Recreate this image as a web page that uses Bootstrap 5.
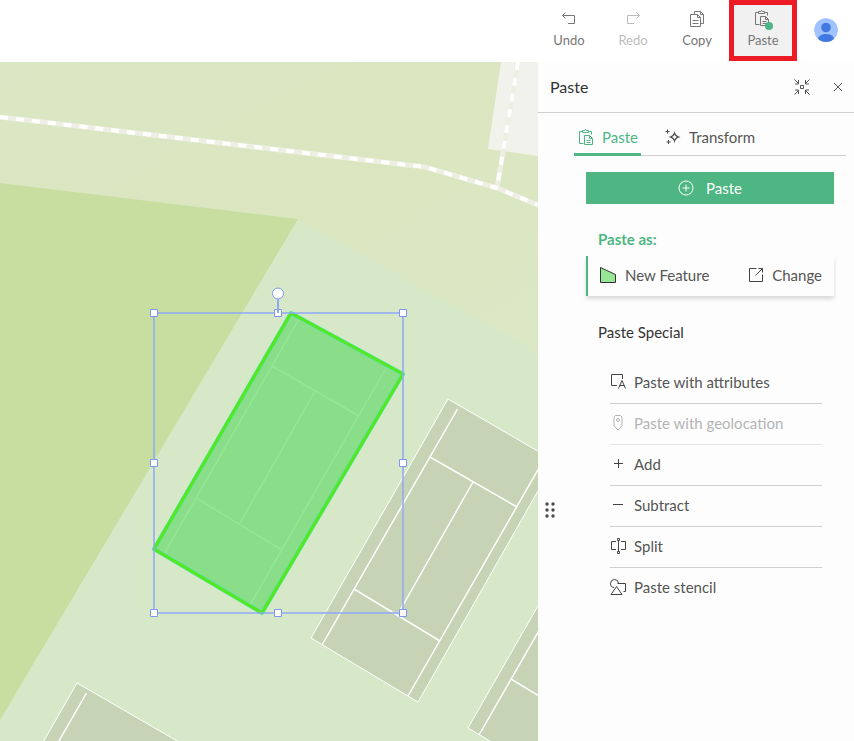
<!DOCTYPE html>
<html lang="en">
<head>
<meta charset="utf-8">
<meta name="viewport" content="width=device-width, initial-scale=1">
<title>Map editor</title>
<link href="https://cdn.jsdelivr.net/npm/bootstrap@5.3.0/dist/css/bootstrap.min.css" rel="stylesheet">
<style>
  body { font-family: Lato, "Open Sans", sans-serif; font-size: 15px; line-height: 20px; color: #555; background: #fff; }
  svg { display: block; flex: none; }
  button { font: inherit; color: inherit; background: none; border: 0; padding: 0; }
  .stroke { fill: none; stroke: currentColor; stroke-width: 1; }
  .topbar { height: 62px; padding-right: 15px; }
  .tool { width: 64px; height: 56px; padding-top: 7px; font-size: 13px; line-height: 18px; color: #777; }
  .tool svg { margin-bottom: 4px; }
  .tool:disabled { color: #bcbcbc; }
  .tool-marked { width: 68px; height: 61px; border: 5px solid #ed1c24; background: #f1f1f1; padding-top: 5px; }
  .tool-marked svg { margin-bottom: 1px; }
  .avatar { margin-left: 16px; }
  .side { width: 316px; background: #fdfdfd; }
  .side-head { height: 51px; padding: 0 10px 0 12px; border-bottom: 1px solid #cfcfcf; gap: 22px; }
  .side-head h1 { font-size: 16px; line-height: 20px; font-weight: 400; color: #333; }
  .grip { width: 24px; margin-top: 389px; align-self: flex-start; color: #4a4a4a; }
  .side-main { padding: 7px 8px 0 12px; }
  .tabs { border-bottom: 1px solid #cfcfcf; height: 36px; gap: 20px; }
  .tabs button { height: 36px; padding: 0 3px 0 4px; border-bottom: 3px solid transparent; gap: 8px; }
  .tabs button svg { color: #4a4a4a; }
  .tabs .current, .tabs .current svg { color: #4db682; border-color: #4db682; }
  .tool-body { padding: 16px 12px 0; }
  .go { height: 32px; background: #4db682; color: #fff; gap: 12px; }
  .label-as { margin: 25px 12px 7px; font-size: 15px; line-height: 20px; font-weight: 700; color: #4db682; }
  .target { height: 40px; border-left: 2px solid #4db682; padding: 0 12px 2px 11px; box-shadow: 0 3px 4px rgba(0,0,0,.14); }
  .target svg, .actions svg { color: #444; }
  .label-special { margin: 26px 12px 20px; font-size: 15px; line-height: 20px; font-weight: 400; color: #333; }
  .actions { margin: 0 12px 0 24px; }
  .actions li { border-bottom: 1px solid #cfcfcf; }
  .actions li:last-child { border: 0; }
  .actions li:first-child { padding-top: 1px; }
  .actions button { height: 40px; gap: 8px; padding-bottom: 2px; }
  .actions button:disabled, .actions button:disabled svg { color: #b4b4b4; }
  .actions .off { border-color: #e4e4e4; }
</style>
<script src="https://cdn.jsdelivr.net/npm/bootstrap@5.3.0/dist/js/bootstrap.bundle.min.js"></script>
</head>
<body class="vh-100 d-flex flex-column overflow-hidden">
<svg width="0" height="0" class="position-absolute" aria-hidden="true">
  <defs>
    <symbol id="clip" viewBox="0 0 16 16"><path class="stroke" d="M4.500 2.500h-3v12h4M10.500 2.500h3v3M4.500 3.500v-2h2.300c.1-1.300 1.400-1.300 1.500 0h2.200v2zM6.500 6.500h5l3 3v6h-8zM11.500 6.500v3h3M8.500 11.500h4M8.500 13.500h4"/></symbol>
  </defs>
</svg>
<header class="topbar d-flex align-items-start justify-content-end flex-shrink-0">
  <button class="tool d-flex flex-column align-items-center mt-1"><svg width="16" height="16" viewBox="0 0 16 16"><path class="stroke" d="M4.500 1.500l-3 3 3 3M1.500 4.500h12v8H7"/></svg>Undo</button>
  <button class="tool d-flex flex-column align-items-center mt-1" disabled><svg width="16" height="16" viewBox="0 0 16 16"><path class="stroke" d="M11.500 1.500l3 3-3 3M14.500 4.500h-12v8H9"/></svg>Redo</button>
  <button class="tool d-flex flex-column align-items-center mt-1"><svg width="16" height="16" viewBox="0 0 16 16"><path class="stroke" d="M5.500 3.500v-3h6l3 3v9h-3M11.500.5v3h3M1.500 3.500h7l3 3v9h-10zM8.500 3.500v3h3M3.500 9.500h6M3.500 12.500h6"/></svg>Copy</button>
  <button class="tool tool-marked d-flex flex-column align-items-center"><svg width="20" height="20" viewBox="-1 0 20 20"><use href="#clip" width="16" height="16"/><circle cx="15" cy="16" r="4" fill="#4db682"/></svg>Paste</button>
  <svg class="avatar mt-3" width="26" height="28" viewBox="0 0 26 28" role="img" aria-label="Account"><clipPath id="face"><circle cx="13" cy="14" r="12"/></clipPath><g clip-path="url(#face)"><circle cx="13" cy="14" r="12" fill="#a0c3ff"/><circle cx="13" cy="11.500" r="4.800" fill="#4278e2"/><ellipse cx="13" cy="23" rx="8" ry="5" fill="#4278e2"/></g></svg>
</header>
<div class="d-flex flex-grow-1">
  <main class="flex-grow-1 position-relative overflow-hidden">
    <svg class="position-absolute w-100 h-100" viewBox="0 62 538 679" preserveAspectRatio="xMinYMin slice" role="img" aria-label="Map with tennis courts">
      <defs>
        <linearGradient id="land" x1="0" y1="0" x2="1" y2="1"><stop offset="0" stop-color="#dae7c4"/><stop offset=".5" stop-color="#dbe6c0"/><stop offset="1" stop-color="#dbe8c6"/></linearGradient>
        <path id="lines" fill="none" stroke="#fff" stroke-width="1.500" d="M457.500 409L322 645M543 461L408 696M430 457l87 50M473 482l-75 132M354 589l86 52"/>
        <g id="court">
          <path fill="#c6d3b5" stroke="#fff" stroke-width="1" d="M448 399L555 461 418 702 311 638z"/>
          <use href="#lines"/>
        </g>
      </defs>
      <rect y="62" width="538" height="679" fill="#d7e8c9"/>
      <path fill="url(#land)" d="M0 62h538v291L298 219 0 183z"/>
      <path fill="#c8dea0" d="M0 183l298 36L0 720z"/>
      <path fill="#f1f2eb" d="M501 62h37v94l-50-7z"/>
      <g fill="none" stroke-linejoin="round">
        <path stroke="#eeeee3" stroke-width="5" d="M0 117l425 50 72 21 41 17M518 62l-21 126"/>
        <path stroke="#fff" stroke-width="4" stroke-dasharray="8 8" d="M0 117l425 50 72 21 41 17M518 62l-21 126"/>
      </g>
      <use href="#court"/><use href="#court" x="157" y="90"/><use href="#court" x="-371" y="284"/>
      <path fill="#c6d3b5" d="M291 313l112 61-141 239-108-64z"/>
      <use href="#lines" x="-158" y="-91"/>
      <path fill="#7de07f" fill-opacity=".82" stroke="#49e5ae" stroke-width="4" stroke-linejoin="round" d="M291 313l112 61-141 239-108-64z"/>
      <path fill="none" stroke="#55e820" stroke-width="3" stroke-linejoin="round" d="M291 313l112 61-141 239-108-64z"/>
      <path fill="none" stroke="#8fa8f5" stroke-opacity=".75" stroke-width="2" d="M154 313h249v300H154z"/>
      <g fill="#fff" stroke="#7e98f0">
        <circle cx="278" cy="293.500" r="5.500"/>
        <path d="M150.500 309.500h7v7h-7zM274.500 309.500h7v7h-7zM399.500 309.500h7v7h-7zM150.500 459.500h7v7h-7zM399.500 459.500h7v7h-7zM150.500 609.500h7v7h-7zM274.500 609.500h7v7h-7zM399.500 609.500h7v7h-7z"/>
      </g>
      <path stroke="#8fa8f5" stroke-width="2" d="M278 299v14"/>
    </svg>
  </main>
  <aside class="side flex-shrink-0">
    <div class="side-head d-flex align-items-center">
      <h1 class="mb-0 me-auto">Paste</h1>
      <button aria-label="Collapse"><svg width="16" height="16" viewBox="0 0 16 16"><path class="stroke" d="M.5.5l4 4M4.500 1v4H1M15.500.5l-4 4M11.500 1v4H15M.5 15.500l4-4M4.500 15v-4H1M15.500 15.500l-4-4M11.500 15v-4H15M6.500 6.500h3v3h-3z"/></svg></button>
      <button aria-label="Close"><svg width="12" height="12" viewBox="0 0 12 12"><path class="stroke" d="M2 2l8 8M10 2l-8 8"/></svg></button>
    </div>
    <div class="d-flex">
      <svg class="grip" height="16" viewBox="0 0 24 16" fill="currentColor" aria-hidden="true"><circle cx="9" cy="2" r="1.700"/><circle cx="15" cy="2" r="1.700"/><circle cx="9" cy="8" r="1.700"/><circle cx="15" cy="8" r="1.700"/><circle cx="9" cy="14" r="1.700"/><circle cx="15" cy="14" r="1.700"/></svg>
      <div class="side-main flex-grow-1">
        <div class="tabs d-flex" role="tablist">
          <button class="current d-flex align-items-center" role="tab" aria-selected="true"><svg width="16" height="16"><use href="#clip"/></svg>Paste</button>
          <button class="d-flex align-items-center" role="tab" aria-selected="false"><svg width="16" height="16" viewBox="0 0 16 16"><path fill="currentColor" fill-rule="evenodd" d="M9.500 2q.8 5.200 6 6-5.200.8-6 6-.8-5.200-6-6 5.200-.8 6-6zM9.500 5.500Q8.800 7.300 7 8q1.800.7 2.500 2.500Q10.200 8.700 12 8q-1.800-.7-2.500-2.500z"/><path class="stroke" d="M2.500.5v4M.5 2.500h4M3.500 11v4M1.500 13h4"/></svg>Transform</button>
        </div>
        <div class="tool-body">
          <button class="go w-100 d-flex align-items-center justify-content-center"><svg width="16" height="16" viewBox="0 0 16 16"><path class="stroke" d="M8 4.500v7M4.500 8h7"/><circle class="stroke" cx="8" cy="8" r="7"/></svg>Paste</button>
          <h2 class="label-as">Paste as:</h2>
          <div class="target d-flex align-items-center justify-content-between">
            <span class="d-flex align-items-center gap-2"><svg width="18" height="18" viewBox="0 0 18 18"><path d="M1.500 1.500l15 7v8h-15z" fill="#96e696" stroke="#333"/></svg>New Feature</span>
            <button class="d-flex align-items-center gap-2"><svg width="16" height="16" viewBox="0 0 16 16"><path class="stroke" d="M8.500 1.500h-7v13h13v-7M10.500 1.500h4v4M14.500 1.500l-7 7"/></svg>Change</button>
          </div>
          <h2 class="label-special">Paste Special</h2>
          <ul class="actions list-unstyled mb-0">
            <li><button class="w-100 d-flex align-items-center"><svg width="16" height="16" viewBox="0 0 16 16"><path class="stroke" d="M12.500 5V.5H1.500v11H7M8.500 14.500l3.500-8 3.500 8M9.500 11.500h5"/></svg>Paste with attributes</button></li>
            <li class="off"><button class="w-100 d-flex align-items-center" disabled><svg width="16" height="16" viewBox="0 0 16 16"><path class="stroke" d="M5.500.5h5l1.500 1.500v9l-4 4-4-4V2z"/><circle class="stroke" cx="8" cy="5" r="1.500"/></svg>Paste with geolocation</button></li>
            <li><button class="w-100 d-flex align-items-center"><svg width="16" height="16" viewBox="0 0 16 16"><path class="stroke" d="M8.500 3v9M4 7.500h9"/></svg>Add</button></li>
            <li><button class="w-100 d-flex align-items-center"><svg width="16" height="16" viewBox="0 0 16 16"><path class="stroke" d="M3 7.500h10"/></svg>Subtract</button></li>
            <li><button class="w-100 d-flex align-items-center"><svg width="16" height="16" viewBox="0 0 16 16"><path class="stroke" d="M6 3.500H1.500v8H6M11 3.500h4.500v8H11M8.500 2.500v11M7.500.5h2v2h-2zM7.500 13.500h2v2h-2z"/></svg>Split</button></li>
            <li><button class="w-100 d-flex align-items-center"><svg width="16" height="16" viewBox="0 0 16 16"><path class="stroke" d="M4 8.500a4 4 0 1 1 4.500-4M7.500 4.500h8v8h-2M1 15.500h11l-5.500-8z"/></svg>Paste stencil</button></li>
          </ul>
        </div>
      </div>
    </div>
  </aside>
</div>
</body>
</html>
